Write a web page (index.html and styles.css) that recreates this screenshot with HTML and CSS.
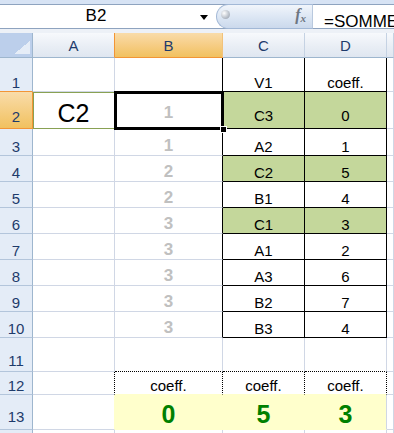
FILE: index.html
```html
<!DOCTYPE html>
<html>
<head>
<meta charset="utf-8">
<link rel="stylesheet" href="styles.css">
</head>
<body>
<div class="fbar">
  <div class="strip">
    <div class="namebox">B2</div>
    <div class="dd"><span class="arrow"></span></div>
    <div class="fxcap"><span class="knob"></span><span class="fx">f<span class="x">x</span></span></div>
    <div class="formula">=SOMMEPROD(($C$2:$C$10=A2)*$D$2:$D$10)</div>
  </div>
</div>
<div class="sheet">
  <div class="row h-hdr">
    <div class="corner"><span class="tri"></span></div>
    <div class="ch ch-a">A</div>
    <div class="ch chs">B</div>
    <div class="ch">C</div>
    <div class="ch">D</div>
    <div class="ch"></div>
  </div>
  <div class="row h1">
    <div class="rh rh-above">1</div>
    <div></div>
    <div class="tl"></div>
    <div class="t">V1</div>
    <div class="t">coeff.</div>
    <div></div>
  </div>
  <div class="row h2">
    <div class="rh rhs">2</div>
    <div class="big selA">C2</div>
    <div class="g gp selB">1<span class="handle"></span></div>
    <div class="t gr p2">C3</div>
    <div class="t gr p2">0</div>
    <div></div>
  </div>
  <div class="row h3">
    <div class="rh">3</div>
    <div></div>
    <div class="g tl">1</div>
    <div class="t">A2</div>
    <div class="t">1</div>
    <div></div>
  </div>
  <div class="row hn">
    <div class="rh">4</div>
    <div></div>
    <div class="g tl">2</div>
    <div class="t gr">C2</div>
    <div class="t gr">5</div>
    <div></div>
  </div>
  <div class="row hn">
    <div class="rh">5</div>
    <div></div>
    <div class="g tl">2</div>
    <div class="t">B1</div>
    <div class="t">4</div>
    <div></div>
  </div>
  <div class="row hn">
    <div class="rh">6</div>
    <div></div>
    <div class="g tl">3</div>
    <div class="t gr">C1</div>
    <div class="t gr">3</div>
    <div></div>
  </div>
  <div class="row hn">
    <div class="rh">7</div>
    <div></div>
    <div class="g tl">3</div>
    <div class="t">A1</div>
    <div class="t">2</div>
    <div></div>
  </div>
  <div class="row hn">
    <div class="rh">8</div>
    <div></div>
    <div class="g tl">3</div>
    <div class="t">A3</div>
    <div class="t">6</div>
    <div></div>
  </div>
  <div class="row hn">
    <div class="rh">9</div>
    <div></div>
    <div class="g tl">3</div>
    <div class="t">B2</div>
    <div class="t">7</div>
    <div></div>
  </div>
  <div class="row hn">
    <div class="rh">10</div>
    <div></div>
    <div class="g tl">3</div>
    <div class="t">B3</div>
    <div class="t">4</div>
    <div></div>
  </div>
  <div class="row h11">
    <div class="rh p11">11</div>
    <div></div>
    <div class="db"></div>
    <div class="db"></div>
    <div class="db"></div>
    <div></div>
  </div>
  <div class="row h12">
    <div class="rh">12</div>
    <div class="dr"></div>
    <div class="dr yb">coeff.</div>
    <div class="dr yb">coeff.</div>
    <div class="dr yb">coeff.</div>
    <div></div>
  </div>
  <div class="row h13">
    <div class="rh p13">13</div>
    <div class="yr"></div>
    <div class="y yr">0</div>
    <div class="y yr">5</div>
    <div class="y">3</div>
    <div></div>
  </div>
  <div class="row h14">
    <div class="rh"></div>
    <div></div>
    <div></div>
    <div></div>
    <div></div>
    <div></div>
  </div>
</div>
</body>
</html>
```

FILE: styles.css
```css
html, body {
  margin: 0;
  padding: 0;
}
body {
  width: 394px;
  height: 433px;
  overflow: hidden;
  background: #ffffff;
  font-family: "Liberation Sans", Arial, sans-serif;
  color: #000;
}

/* formula bar */
.fbar {
  height: 33px;
  box-sizing: border-box;
  padding-top: 4px;
  background: linear-gradient(#d7e3f4 0, #d7e3f4 4px, #edf1f7 4px);
}
.strip {
  height: 25px;
  box-sizing: border-box;
  border-top: 1px solid #8ea3bf;
  border-bottom: 1px solid #8ea3bf;
  background: #fff;
  display: flex;
}
.namebox {
  width: 192px;
  font-size: 17px;
  line-height: 1;
  text-align: center;
  padding-top: 2px;
  box-sizing: border-box;
}
.dd {
  width: 24px;
  display: flex;
  justify-content: center;
  align-items: center;
}
.arrow {
  width: 0;
  height: 0;
  border-left: 4px solid transparent;
  border-right: 4px solid transparent;
  border-top: 5px solid #000;
  margin-top: 1px;
}
.fxcap {
  width: 97px;
  margin: -1px 0;
  box-sizing: border-box;
  border: 1px solid #a2b8d6;
  border-right-color: #b9c9de;
  border-radius: 13px 0 0 13px;
  background: linear-gradient(#f1f5fb, #dde7f4 50%, #cbd9ec);
  display: flex;
  align-items: center;
  justify-content: space-between;
  padding: 0 6px 0 4px;
}
.knob {
  width: 9px;
  height: 9px;
  border-radius: 50%;
  background: radial-gradient(circle at 35% 35%, #ffffff, #b7bec8 60%, #8f98a5);
  margin-top: -4px;
}
.fx {
  font-family: "Liberation Serif", serif;
  font-style: italic;
  font-weight: bold;
  font-size: 16px;
  color: #6e7682;
  line-height: 1;
  margin-top: -3px;
}
.fx .x {
  font-size: 11px;
  position: relative;
  top: 2px;
}
.formula {
  flex: 1;
  font-size: 17px;
  line-height: 1;
  padding: 8px 0 0 11px;
  white-space: nowrap;
  overflow: hidden;
}

/* sheet */
.row {
  display: grid;
  grid-template-columns: 33px 82px 108px 82px 82px 1fr;
}
.row > div {
  box-sizing: border-box;
  border-right: 1px solid #d0d7e5;
  border-bottom: 1px solid #d0d7e5;
  display: flex;
  align-items: flex-end;
  justify-content: center;
  font-size: 15px;
  line-height: 1;
  padding-bottom: 1px;
  overflow: hidden;
}
.h-hdr { height: 25px; }
.h1 { height: 34px; }
.h2 { height: 37px; }
.h3 { height: 27px; }
.hn { height: 26px; }
.h11 { height: 34px; }
.h12 { height: 23px; }
.h13 { height: 35px; }
.h14 { height: 10px; }

/* headers */
.row > .corner {
  background: #bccfeb;
  border-right: 1px solid #9eb6ce;
  border-bottom: 1px solid #9eb6ce;
  justify-content: flex-end;
  padding: 0 2px 3px 0;
}
.tri {
  width: 16px;
  height: 13px;
  background: linear-gradient(to bottom right, transparent 50%, #e6edf7 50%);
}
.row > .ch {
  background: linear-gradient(#f7f9fc, #e9eef5 55%, #dfe6f0);
  border-right: 1px solid #c5d2e3;
  border-bottom: 1px solid #9eb6ce;
  align-items: center;
  padding: 1px 0 0;
  color: #1e3b6b;
  font-size: 15px;
}
.row > .ch-a {
  border-right-color: #f29536;
}
.row > .chs {
  background: linear-gradient(#f9dcaa, #f6cd85 50%, #f1c15f);
  border-bottom-color: #f29536;
  border-right-color: #f2c27a;
}
.row > .rh {
  background: #e4ecf7;
  border-right: 1px solid #9eb6ce;
  border-bottom: 1px solid #b3c5db;
  color: #1e3b6b;
  font-size: 15px;
  padding-bottom: 1px;
}
.row > .rh-above {
  border-bottom-color: #f29536;
}
.row > .rhs {
  background: linear-gradient(#f9dcaa, #f1c15f);
  border-right-color: #f29536;
  border-bottom-color: #f29536;
  padding-bottom: 4px;
}
.row > .p11 { padding-bottom: 3px; }
.row > .p13 { padding-bottom: 5px; }

/* cells */
.row > .t {
  border-right: 1px solid #000;
  border-bottom: 1px solid #000;
}
.row > .tl {
  border-right: 1px solid #000;
}
.row > .gr {
  background: #c4d79b;
}
.row > .p2 {
  padding-bottom: 5px;
}
.row > .g {
  color: #c0c0c0;
  font-weight: bold;
  font-size: 17px;
}
.row > .gp {
  padding-bottom: 7px;
}
.row > .big {
  font-size: 25px;
  padding-bottom: 2px;
}
.row > .selA {
  border-right-color: #89a153;
  border-bottom-color: #89a153;
  box-shadow: inset 1px 1px 0 #89a153;
}
.row > .selB {
  position: relative;
  overflow: visible;
  border-right: 1px solid #000;
}
.selB::after {
  content: "";
  position: absolute;
  left: -1px;
  right: -2px;
  top: -1px;
  bottom: -2px;
  border: 3px solid #000;
}
.handle {
  position: absolute;
  right: -5px;
  bottom: -5px;
  width: 5px;
  height: 5px;
  background: #000;
  border: 1px solid #fff;
  z-index: 2;
}
.row > .db {
  border-bottom: 1px dotted #000;
}
.row > .dr {
  border-right: 1px dotted #000;
}
.row > .yb {
  border-bottom-color: #ffffcc;
}
.row > .y {
  background: #ffffcc;
  color: #008000;
  font-weight: bold;
  font-size: 25px;
  padding-bottom: 2px;
  border-bottom-color: #ffffcc;
}
.row > .yr {
  border-right-color: #ffffcc;
}
```
